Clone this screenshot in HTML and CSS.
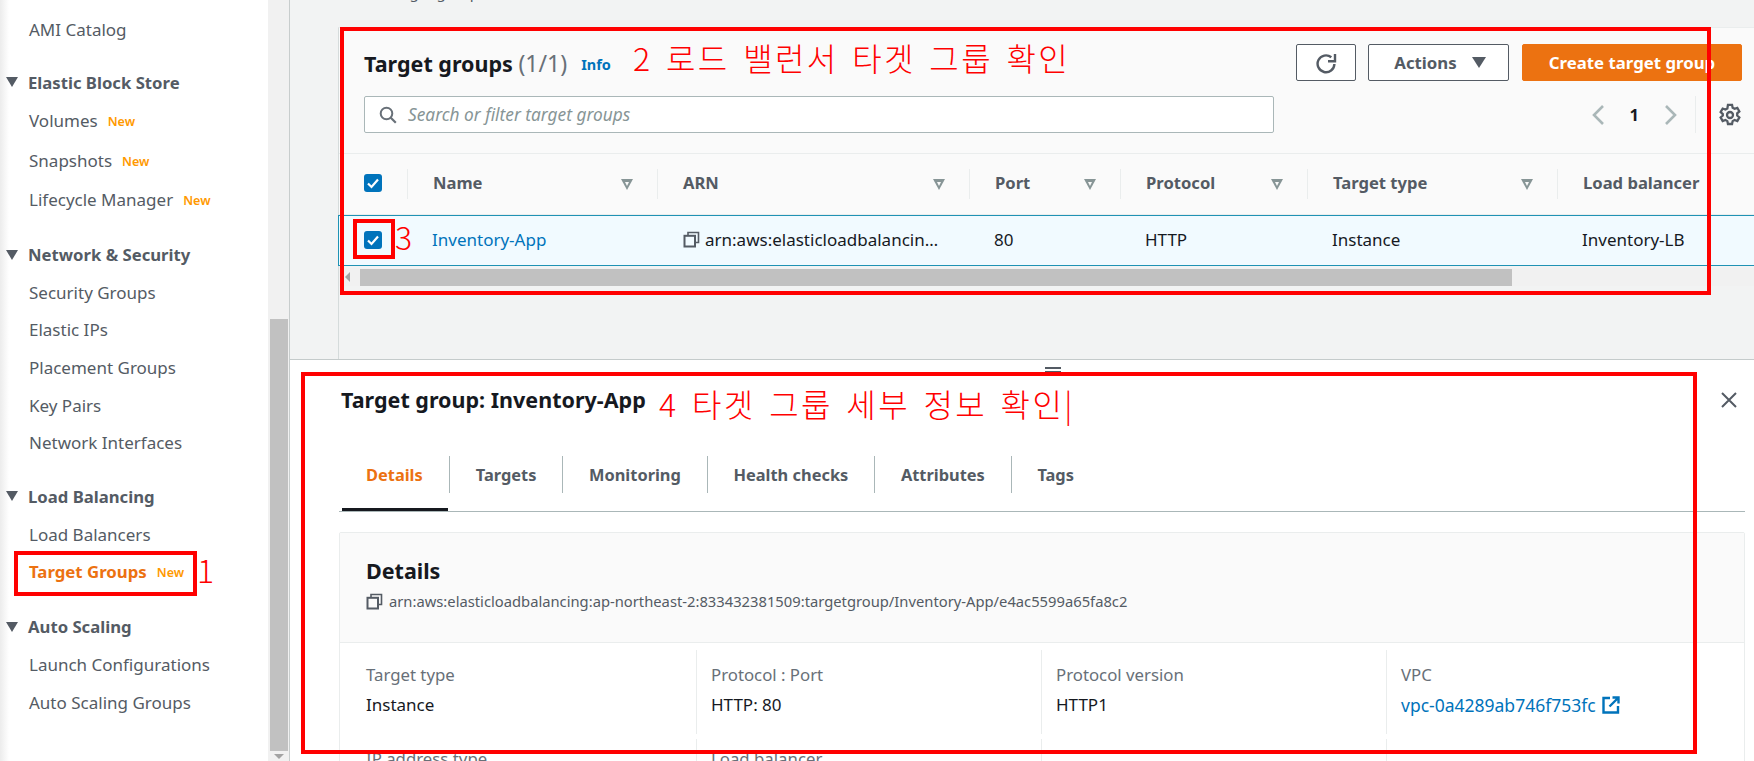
FILE: index.html
```html
<!DOCTYPE html>
<html lang="en">
<head>
<meta charset="utf-8">
<title>Target groups</title>
<link rel="stylesheet" href="styles.css">
</head>
<body>
<div class="app">
  <nav class="side">
    <a class="item first">AMI Catalog</a>
    <h3 class="head head-tight"><i class="tri"></i>Elastic Block Store</h3>
    <a class="item tall">Volumes <span class="new">New</span></a>
    <a class="item tall">Snapshots <span class="new">New</span></a>
    <a class="item tall">Lifecycle Manager <span class="new">New</span></a>
    <h3 class="head"><i class="tri"></i>Network &amp; Security</h3>
    <a class="item">Security Groups</a>
    <a class="item">Elastic IPs</a>
    <a class="item">Placement Groups</a>
    <a class="item">Key Pairs</a>
    <a class="item">Network Interfaces</a>
    <h3 class="head"><i class="tri"></i>Load Balancing</h3>
    <a class="item">Load Balancers</a>
    <a class="item active">Target Groups <span class="new">New</span></a>
    <h3 class="head head-wide"><i class="tri"></i>Auto Scaling</h3>
    <a class="item">Launch Configurations</a>
    <a class="item">Auto Scaling Groups</a>
  </nav>
  <div class="vscroll"><div class="vthumb"></div><i class="vdown"></i></div>
  <main class="main">
    <section class="top">
      <div class="crumb">EC2 &gt; Target groups</div>
      <div class="card">
        <div class="card-head">
          <div class="title-row">
            <h2 class="h2">Target groups <span class="count">(1/1)</span></h2>
            <a class="info">Info</a>
            <div class="actions">
              <button class="btn refresh"><svg width="22" height="22" viewBox="0 0 22 22"><path d="M16.300 5.300A8.400 8.400 0 1 0 19.400 12" fill="none" stroke="#545b64" stroke-width="2.400"/><path d="M20 2v7.200h-7" fill="none" stroke="#545b64" stroke-width="2.400"/></svg></button>
              <button class="btn act">Actions<i class="tri big"></i></button>
              <button class="btn primary">Create target group</button>
            </div>
          </div>
          <div class="filter-row">
            <div class="search">
              <svg width="18" height="18" viewBox="0 0 18 18"><circle cx="7.500" cy="7.500" r="5.800" fill="none" stroke="#687078" stroke-width="2"/><path d="M11.800 11.800l5 5" stroke="#687078" stroke-width="2.200"/></svg>
              <span class="ph">Search or filter target groups</span>
            </div>
            <div class="pager">
              <svg width="14" height="22" viewBox="0 0 14 22"><path d="M12 2L3 11l9 9" fill="none" stroke="#aab7b8" stroke-width="2.600"/></svg>
              <span class="pnum">1</span>
              <svg width="14" height="22" viewBox="0 0 14 22"><path d="M2 2l9 9-9 9" fill="none" stroke="#aab7b8" stroke-width="2.600"/></svg>
            </div>
            <div class="gear">
              <svg width="24" height="24" viewBox="0 0 20 20"><path d="M8.300 1.500h3.400l.5 2.400 1.600.9 2.300-.8 1.700 3-1.800 1.600v1.800l1.800 1.600-1.700 3-2.300-.8-1.600.9-.5 2.400H8.300l-.5-2.400-1.600-.9-2.300.8-1.700-3 1.800-1.600V9.200L2.200 7.600l1.700-3 2.300.8 1.600-.9z" fill="none" stroke="#545b64" stroke-width="1.900"/><circle cx="10" cy="10" r="2.500" fill="none" stroke="#545b64" stroke-width="1.900"/></svg>
            </div>
          </div>
        </div>
        <div class="tbl thead">
          <div class="c c0"><span class="cb"><svg width="18" height="18" viewBox="0 0 18 18"><path d="M4 9.500l3.500 3.500L14 5.500" fill="none" stroke="#fff" stroke-width="2.200"/></svg></span></div>
          <div class="c c1">Name<i class="sort"></i></div>
          <div class="c c2">ARN<i class="sort"></i></div>
          <div class="c c3">Port<i class="sort"></i></div>
          <div class="c c4">Protocol<i class="sort"></i></div>
          <div class="c c5">Target type<i class="sort"></i></div>
          <div class="c c6">Load balancer</div>
        </div>
        <div class="tbl trow">
          <div class="c c0"><span class="cb"><svg width="18" height="18" viewBox="0 0 18 18"><path d="M4 9.500l3.500 3.500L14 5.500" fill="none" stroke="#fff" stroke-width="2.200"/></svg></span></div>
          <div class="c c1"><a class="link">Inventory-App</a></div>
          <div class="c c2 arn"><svg class="copy" width="17" height="17" viewBox="0 0 17 17"><path d="M5 4.500V1.500h10.500v10H12" fill="none" stroke="#545b64" stroke-width="1.600"/><rect x="1.500" y="4.800" width="10.500" height="10.700" fill="none" stroke="#545b64" stroke-width="2"/></svg>arn:aws:elasticloadbalancin…</div>
          <div class="c c3">80</div>
          <div class="c c4">HTTP</div>
          <div class="c c5">Instance</div>
          <div class="c c6">Inventory-LB</div>
        </div>
        <div class="hscroll"><i class="harrow"></i><div class="hthumb"></div></div>
      </div>
    </section>
    <section class="bottom">
      <div class="grip"></div>
      <div class="detail">
        <div class="detail-title">
          <h2 class="h3">Target group: Inventory-App</h2>
          <svg class="close" width="18" height="18" viewBox="0 0 18 18"><path d="M2 2l14 14M16 2L2 16" stroke="#545b64" stroke-width="2"/></svg>
        </div>
        <div class="tabs">
          <a class="tab on">Details</a>
          <a class="tab">Targets</a>
          <a class="tab">Monitoring</a>
          <a class="tab">Health checks</a>
          <a class="tab">Attributes</a>
          <a class="tab">Tags</a>
        </div>
        <div class="panel">
          <div class="panel-head">
            <h3 class="h4">Details</h3>
            <div class="arnline"><svg class="copy" width="17" height="17" viewBox="0 0 17 17"><path d="M5 4.500V1.500h10.500v10H12" fill="none" stroke="#545b64" stroke-width="1.600"/><rect x="1.500" y="4.800" width="10.500" height="10.700" fill="none" stroke="#545b64" stroke-width="2"/></svg>arn:aws:elasticloadbalancing:ap-northeast-2:833432381509:targetgroup/Inventory-App/e4ac5599a65fa8c2</div>
          </div>
          <div class="kv">
            <div class="kvc"><div class="k">Target type</div><div class="v">Instance</div></div>
            <div class="kvc"><div class="k">Protocol : Port</div><div class="v">HTTP: 80</div></div>
            <div class="kvc"><div class="k">Protocol version</div><div class="v">HTTP1</div></div>
            <div class="kvc"><div class="k">VPC</div><div class="v"><a class="link vpc">vpc-0a4289ab746f753fc</a><svg class="ext" width="18" height="18" viewBox="0 0 18 18"><path d="M8 2H1.500v14.500H16V10" fill="none" stroke="#0073bb" stroke-width="2.400"/><path d="M10.500 1.500h6v6M16.500 1.500L7.500 10.500" fill="none" stroke="#0073bb" stroke-width="2.400"/></svg></div></div>
          </div>
          <div class="kv kv-next">
            <div class="kvc"><div class="k">IP address type</div></div>
            <div class="kvc"><div class="k">Load balancer</div></div>
            <div class="kvc"></div>
            <div class="kvc"></div>
          </div>
        </div>
      </div>
    </section>
  </main>
</div>
<div class="mark m-side"></div>
<div class="mark m-list"></div>
<div class="mark m-check"></div>
<div class="mark m-detail"></div>
<span class="note n1">1</span>
<span class="note n2">2 로드 밸런서 타겟 그룹 확인</span>
<span class="note n3">3</span>
<span class="note n4">4 타겟 그룹 세부 정보 확인|</span>
</body>
</html>
```
FILE: styles.css
```css
* { box-sizing: border-box; }
html, body { margin: 0; height: 761px; overflow: hidden; }
body { font-family: "Noto Sans", "Open Sans", sans-serif; font-size: 17px; color: #16191f; background: #fff; position: relative; }
h2, h3 { margin: 0; }
button { font-family: inherit; }
.app { display: flex; height: 761px; overflow: hidden; }

.side { width: 268px; flex: none; padding-top: 10px; background: linear-gradient(90deg, #ececec 0, #fff 9px); color: #545b64; font-size: 17px; }
.item { display: flex; align-items: center; gap: 10px; height: 37.600px; padding-left: 29px; color: #545b64; white-space: nowrap; }
.item.first { height: 39px; }
.item.tall { height: 39.500px; }
.item.active { color: #ec7211; font-weight: 700; font-size: 16.800px; }
.new { color: #ff9900; font-size: 12.500px; font-weight: 600; padding-top: 2px; }
.head { display: flex; align-items: center; height: 38px; margin-top: 16px; padding-left: 6px; font-size: 16.700px; font-weight: 700; color: #545b64; white-space: nowrap; }
.head-tight { margin-top: 14px; }
.head-wide { margin-top: 17px; }
.tri { display: inline-block; width: 0; height: 0; border-left: 6px solid transparent; border-right: 6px solid transparent; border-top: 10px solid #545b64; margin-right: 10px; }

.vscroll { width: 21px; flex: none; background: #f1f1f1; padding: 319px 1px 0 2px; position: relative; }
.vthumb { height: 432px; background: #c1c1c1; }
.vdown { display: block; width: 0; height: 0; margin: 3px auto 0; border-left: 5px solid transparent; border-right: 5px solid transparent; border-top: 5px solid #a3a3a3; }

.main { flex: 1; min-width: 0; border-left: 1px solid #c8cdcd; background: #f2f3f3; display: flex; flex-direction: column; }
.top { height: 360px; flex: none; padding: 0 0 0 48px; border-bottom: 1px solid #c5cbcb; overflow: hidden; }
.crumb { height: 20px; margin: -18px 0 25px 7px; font-size: 15px; line-height: 20px; color: #545b64; white-space: nowrap; }
.card { height: 340px; border-left: 1px solid #d5dbdb; border-top: 1px solid #eaeded; }
.card-head { height: 126px; background: #fafafa; border-bottom: 1px solid #eaeded; padding: 16px 12px 0 25px; }
.title-row { display: flex; align-items: center; height: 37px; }
.h2 { font-size: 21.500px; font-weight: 700; color: #16191f; }
.count { font-weight: 400; color: #687078; font-size: 23px; }
.info { color: #0073bb; font-size: 14.500px; font-weight: 700; margin-left: 14px; padding-top: 3px; }
.actions { margin-left: auto; display: flex; gap: 12px; }
.btn { height: 37px; border: 1px solid #545b64; border-radius: 2px; background: #fff; color: #545b64; font-size: 16.800px; font-weight: 700; display: flex; align-items: center; justify-content: center; padding: 0; }
.refresh { width: 60px; }
.act { width: 141px; gap: 15px; padding-left: 3px; }
.act .tri { margin: 0; border-left-width: 7px; border-right-width: 7px; border-top-width: 11px; }
.primary { width: 220px; margin-left: 1px; background: #ec7211; border-color: #ec7211; color: #fff; }
.filter-row { display: flex; align-items: center; height: 37px; margin-top: 15px; }
.search { width: 910px; height: 37px; border: 1px solid #aab7b8; border-radius: 2px; background: #fff; display: flex; align-items: center; gap: 11px; padding-left: 14px; }
.ph { color: #879596; font-style: italic; font-size: 17.300px; }
.pager { margin-left: 317px; display: flex; align-items: center; gap: 25px; }
.pnum { font-weight: 700; font-size: 16.500px; }
.gear { height: 37px; border-left: 1px solid #eaeded; margin-left: 17px; padding-left: 22px; display: flex; align-items: center; }

.tbl { display: flex; align-items: center; }
.c { flex: none; height: 100%; display: flex; align-items: center; position: relative; white-space: nowrap; }
.c0 { width: 68px; padding-left: 25px; }
.c1 { width: 250px; }
.c2 { width: 312px; }
.c3 { width: 151px; }
.c4 { width: 187px; }
.c5 { width: 250px; }
.c6 { width: 200px; }
.thead { height: 61px; background: #fafafa; border-bottom: 1px solid #eaeded; color: #545b64; font-weight: 700; font-size: 16.600px; }
.thead .c { padding: 0 0 3px 26px; }
.thead .c0 { padding-left: 25px; }
.thead .c1::before, .thead .c2::before, .thead .c3::before, .thead .c4::before, .thead .c5::before, .thead .c6::before { content: ""; position: absolute; left: 0; top: 15px; height: 30px; border-left: 1px solid #eaeded; }
.sort { position: absolute; right: 24px; top: 25px; width: 0; height: 0; border-left: 6.500px solid transparent; border-right: 6.500px solid transparent; border-top: 11px solid #879596; }
.sort::after { content: ""; position: absolute; left: -2.500px; top: -8.500px; border-left: 2.500px solid transparent; border-right: 2.500px solid transparent; border-top: 4px solid #fafafa; }
.cb { display: block; width: 18px; height: 18px; background: #0073bb; border-radius: 3px; }
.cb svg { display: block; }
.trow { height: 51px; margin-left: -1px; width: 1416px; background: #f1faff; border: 1px solid #1f92b4; border-width: 1px 0 1px 1px; color: #16191f; }
.trow .c { padding: 0 0 2px 25px; }
.trow .arn { padding-left: 26px; }
.copy { flex: none; margin-right: 5px; }
.link { color: #0073bb; }
.hscroll { margin-top: 2px; height: 18px; background: #f1f1f1; display: flex; align-items: center; padding-left: 6px; width: 1416px; }
.harrow { width: 0; height: 0; border-top: 5px solid transparent; border-bottom: 5px solid transparent; border-right: 5px solid #a3a3a3; }
.hthumb { height: 17px; width: 1152px; margin-left: 10px; background: #c1c1c1; }

.bottom { flex: 1; min-height: 0; background: #fff; position: relative; padding-left: 49px; overflow: hidden; }
.grip { position: absolute; left: 755px; top: 7px; width: 16px; height: 6px; border-top: 2px solid #545b64; border-bottom: 2px solid #545b64; }
.detail { width: 1406px; }
.detail-title { height: 97px; display: flex; padding: 25px 0 0 2px; position: relative; }
.h3 { font-size: 21.500px; font-weight: 700; line-height: 30px; }
.close { position: absolute; right: 7px; top: 31px; }
.tabs { height: 55px; display: flex; align-items: flex-start; border-bottom: 1px solid #aab7b8; }
.tab { height: 37px; border-left: 1px solid #aab7b8; display: flex; align-items: center; padding: 0 25.800px; color: #545b64; font-weight: 700; font-size: 16.400px; position: relative; white-space: nowrap; margin-top: -1px; }
.tab.on { color: #ec7211; border-left: 0; padding: 0 0 0 27px; width: 110px; }
.tab.on::after { content: ""; position: absolute; left: 3px; right: 1px; bottom: -18px; height: 3px; background: #16191f; }
.panel { margin-top: 20px; border: 1px solid #eaeded; border-radius: 2px; background: #fff; }
.panel-head { height: 110px; background: #fafafa; border-bottom: 1px solid #eaeded; padding: 21px 26px 0; }
.h4 { font-size: 21.500px; font-weight: 700; line-height: 34px; }
.arnline { display: flex; align-items: center; margin-top: 3px; font-size: 14.750px; color: #545b64; }
.arnline .copy { margin-right: 6px; }
.kv { display: grid; grid-template-columns: 356px 345px 345px 1fr; padding-top: 7px; }
.kv-next { padding-top: 5px; }
.kvc { padding-left: 14px; min-height: 84px; border-left: 1px solid #eaeded; }
.kvc:first-child { padding-left: 26px; border-left: 0; }
.k { color: #687078; line-height: 22px; padding-top: 14px; font-size: 16.800px; }
.kv-next .k { padding-top: 9px; }
.v { line-height: 22px; margin-top: 8px; display: flex; align-items: center; gap: 6px; }
.vpc { font-size: 17.500px; }
.ext { flex: none; }

.mark { position: absolute; border: 4px solid #f00; pointer-events: none; }
.m-side { left: 14px; top: 551px; width: 183px; height: 45px; }
.m-list { left: 340px; top: 27px; width: 1371px; height: 268px; }
.m-check { left: 353px; top: 219px; width: 42px; height: 40px; }
.m-detail { left: 301px; top: 372px; width: 1396px; height: 382px; }
.note { position: absolute; color: #f00; font-family: "Noto Sans CJK KR", "Noto Sans", sans-serif; font-weight: 300; white-space: nowrap; line-height: 1; }
.n1 { left: 197px; top: 553px; font-size: 32px; }
.n2 { left: 633px; top: 41px; font-size: 32px; letter-spacing: 2.400px; word-spacing: 4px; }
.n3 { left: 395px; top: 220px; font-size: 32px; }
.n4 { left: 659px; top: 387px; font-size: 32px; letter-spacing: 2.400px; word-spacing: 4px; }
```
